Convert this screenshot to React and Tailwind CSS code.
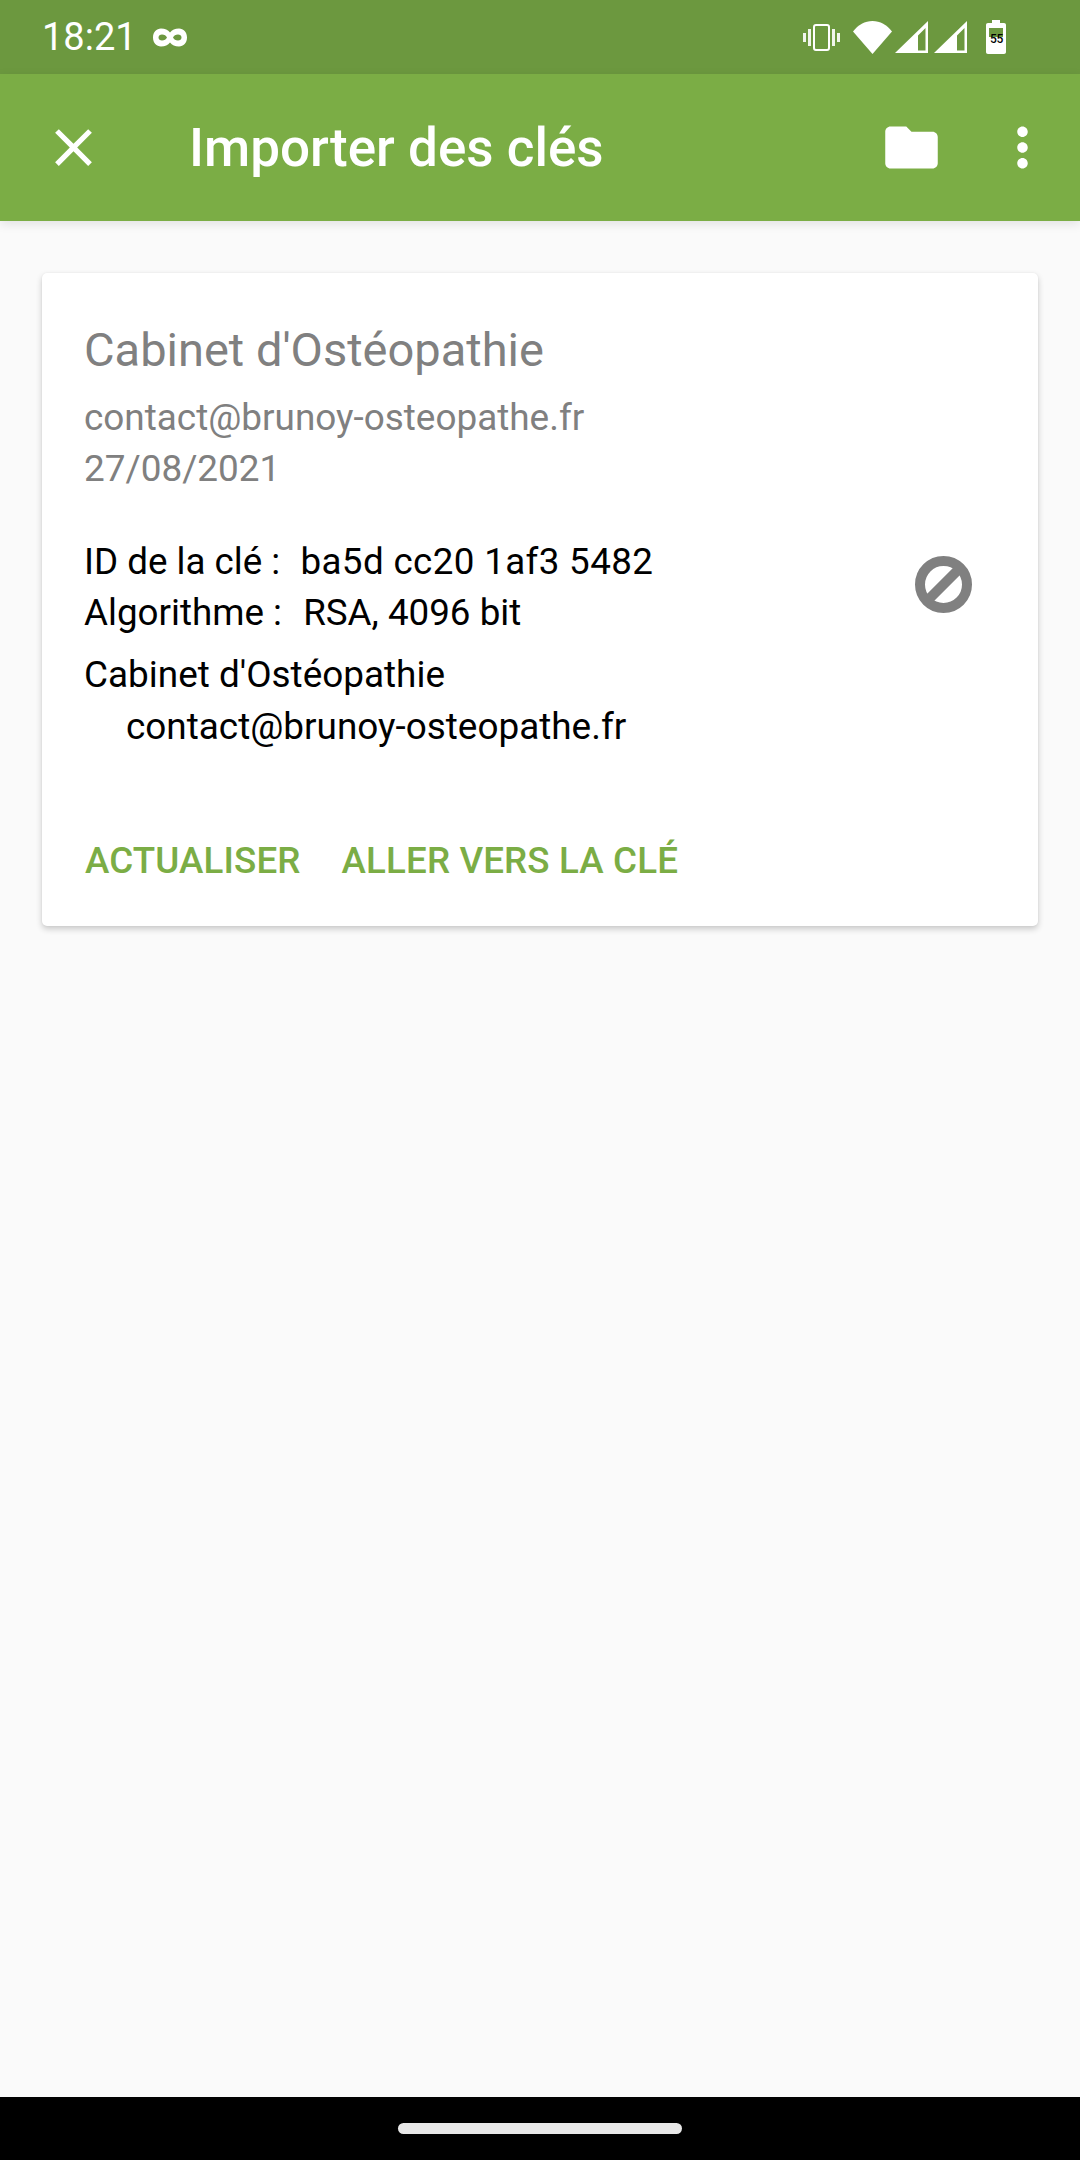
import React from 'react';

const Icon = ({ d, size = 63, className = '' }) => (
  <svg width={size} height={size} viewBox="0 0 24 24" fill="currentColor" className={className}>
    <path d={d} />
  </svg>
);

const Infinity8 = () => (
  <svg width="34" height="19" viewBox="0 0 34 19" className="ml-[16px]">
    <path fill="#fff" fillRule="evenodd" d="M8 0.500C3.500 0.500 0 4 0 9.500s3.500 9 8 9c4 0 7-1.500 9-4 2 2.500 5 4 9 4 4.500 0 8-3.500 8-9s-3.500-9-8-9c-4 0-7 1.500-9 4-2-2.500-5-4-9-4zm1 6c2.500 0 4 1.300 5 3-1 1.700-2.500 3-5 3-2 0-3.500-1.300-3.500-3s1.500-3 3.500-3zm16 0c2 0 3.500 1.300 3.500 3s-1.500 3-3.500 3c-2.500 0-4-1.300-5-3 1-1.700 2.500-3 5-3z" />
  </svg>
);

const Vibrate = () => (
  <svg width="37" height="27" viewBox="0 0 37 27" fill="none">
    <rect x="11" y="1" width="15" height="25" rx="2" stroke="#fff" strokeWidth="2" />
    <rect x="0" y="9" width="3" height="9" fill="#fff" opacity="0.9" />
    <rect x="5" y="5" width="3" height="17" fill="#fff" opacity="0.9" />
    <rect x="29" y="5" width="3" height="17" fill="#fff" opacity="0.9" />
    <rect x="34" y="9" width="3" height="9" fill="#fff" opacity="0.9" />
  </svg>
);

const Wifi = () => (
  <svg width="39" height="33" viewBox="0 0 39 33">
    <path fill="#fff" d="M19.500 33L0 10.500C5 4 12 0 19.500 0S34 4 39 10.500z" />
  </svg>
);

const Signal = ({ className = '' }) => (
  <svg width="33" height="33" viewBox="0 0 33 33" className={className}>
    <path fill="#fff" fillRule="evenodd" d="M33 0v32H0zM30.500 7L23 14.500v15h7.500z" />
  </svg>
);

const Battery = () => (
  <div className="relative ml-[19px] w-[20px] h-[34px]">
    <svg width="20" height="34" viewBox="0 0 20 34" className="block">
      <path fill="#fff" fillRule="evenodd" d="M6 0h8v3h4c1.200 0 2 .8 2 2v27c0 1.200-.8 2-2 2H2c-1.200 0-2-.8-2-2V5c0-1.200.8-2 2-2h4zM3 8v9h14V8z" />
    </svg>
    <span className="absolute left-[4px] top-[12px] text-[12px] leading-[14px] font-medium tracking-[-0.3px] text-black font-['Roboto',sans-serif]">55</span>
  </div>
);

const App = () => {
  return (
    <div className="w-[1080px] h-[2160px] flex flex-col bg-[#fafafa] font-['Roboto',sans-serif] overflow-hidden">
      {/* status bar */}
      <div className="h-[74px] shrink-0 bg-[#6c983f] flex items-center pl-[42px] pr-[74px] text-white">
        <span className="text-[38px] leading-none">18:21</span>
        <Infinity8 />
        <div className="ml-auto flex items-center">
          <Vibrate />
          <div className="ml-[13px]"><Wifi /></div>
          <Signal className="ml-[3px]" />
          <Signal className="ml-[6px]" />
          <Battery />
        </div>
      </div>

      {/* toolbar */}
      <div className="relative z-10 h-[147px] shrink-0 bg-[#7bad45] flex items-center pl-[42px] pr-[26px] text-white shadow-[0_3px_10px_rgba(0,0,0,0.1)]">
        <Icon d="M19 6.410L17.590 5 12 10.590 6.410 5 5 6.410 10.590 12 5 17.590 6.410 19 12 13.410 17.590 19 19 17.590 13.410 12z" />
        <h1 className="ml-[84px] pt-[2px] text-[53px] leading-none font-medium">Importer des clés</h1>
        <div className="ml-auto flex items-center">
          <Icon d="M10 4H4c-1.100 0-2 .9-2 2v12c0 1.100.9 2 2 2h16c1.100 0 2-.9 2-2V8c0-1.100-.9-2-2-2h-8l-2-2z" />
          <Icon className="ml-[48px]" d="M12 8c1.100 0 2-.9 2-2s-.9-2-2-2-2 .9-2 2 .9 2 2 2zm0 2c-1.100 0-2 .9-2 2s.9 2 2 2 2-.9 2-2-.9-2-2-2zm0 6c-1.100 0-2 .9-2 2s.9 2 2 2 2-.9 2-2-.9-2-2-2z" />
        </div>
      </div>

      {/* content */}
      <main className="flex-1 px-[42px] pt-[52px]">
        <div className="h-[653px] bg-white rounded-[5px] shadow-[0_3px_6px_rgba(0,0,0,0.2),0_0_2px_rgba(0,0,0,0.06)] pl-[42px] pr-[66px] pt-[49px] flex flex-col">
          <div className="text-[47px] leading-[56px] text-[#808080]">Cabinet d'Ostéopathie</div>
          <div className="mt-[14px] text-[36.900px] leading-[51px] text-[#808080]">contact@brunoy-osteopathe.fr</div>
          <div className="text-[36.900px] leading-[51px] text-[#808080]">27/08/2021</div>

          <div className="mt-[42px] flex items-center justify-between text-black text-[36.750px] leading-[52px]">
            <div>
              <div className="whitespace-pre">ID de la clé :  <span className="ml-[2px] tracking-[0.36px]">ba5d cc20 1af3 5482</span></div>
              <div className="whitespace-pre -mt-[1px]">Algorithme :  <span className="ml-[3px]">RSA, 4096 bit</span></div>
            </div>
            <svg width="57" height="57" viewBox="0 0 57 57" fill="none" stroke="#808080" strokeWidth="10" className="mb-[6px]">
              <circle cx="28.500" cy="28.500" r="23.500" />
              <line x1="11" y1="46" x2="46" y2="11" />
            </svg>
          </div>

          <div className="mt-[10px] text-black text-[36.900px] leading-[52px]">
            <div>Cabinet d'Ostéopathie</div>
            <div className="pl-[42px]">contact@brunoy-osteopathe.fr</div>
          </div>

          <div className="mt-[86px] ml-[1px] flex gap-[41px] text-[36.750px] leading-[44px] font-medium tracking-[0.12px] text-[#7bad45]">
            <span>ACTUALISER</span>
            <span>ALLER VERS LA CLÉ</span>
          </div>
        </div>
      </main>

      {/* nav bar */}
      <div className="h-[63px] shrink-0 bg-black flex items-center justify-center">
        <div className="w-[284px] h-[11px] rounded-full bg-[#e8e8e8]" />
      </div>
    </div>
  );
};

export default App;
